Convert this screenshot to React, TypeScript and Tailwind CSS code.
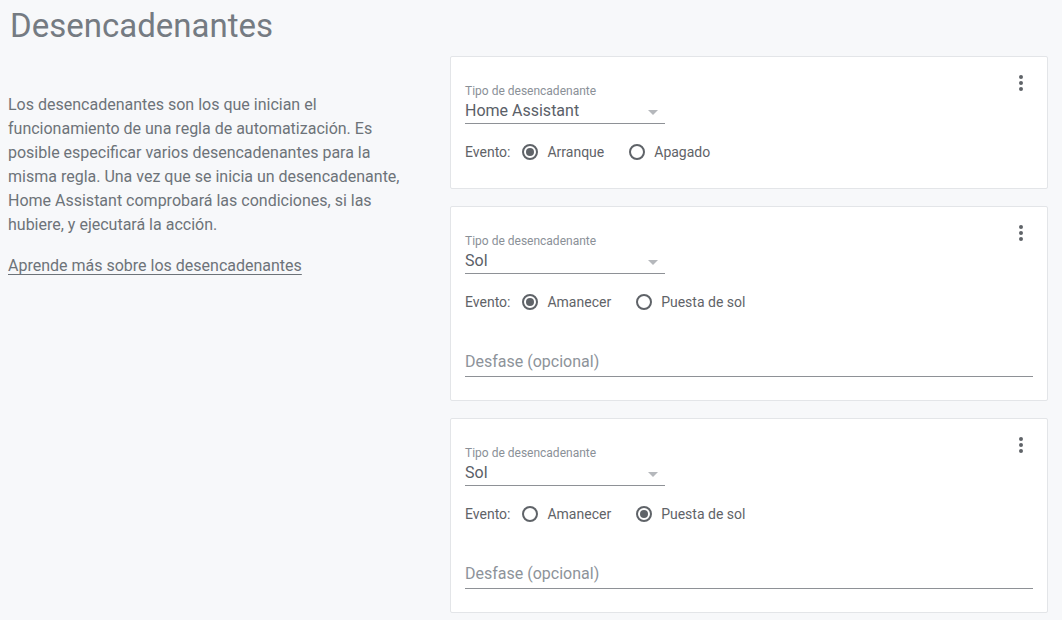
import React from "react";

const font = { fontFamily: "Roboto, 'Noto Sans', sans-serif" };

function Dots() {
  return (
    <svg width="24" height="24" viewBox="0 0 24 24" className="absolute top-[14px] right-[14px]">
      <path
        fill="#5f6368"
        d="M12,16A2,2 0 0,1 14,18A2,2 0 0,1 12,20A2,2 0 0,1 10,18A2,2 0 0,1 12,16M12,10A2,2 0 0,1 14,12A2,2 0 0,1 12,14A2,2 0 0,1 10,12A2,2 0 0,1 12,10M12,4A2,2 0 0,1 14,6A2,2 0 0,1 12,8A2,2 0 0,1 10,6A2,2 0 0,1 12,4Z"
      />
    </svg>
  );
}

function Radio({ checked, label }: { checked: boolean; label: string }) {
  return (
    <div className="flex items-center">
      <span className="w-4 h-4 rounded-full border-2 border-[#5f6368] flex items-center justify-center">
        {checked && <span className="w-2 h-2 rounded-full bg-[#5f6368]" />}
      </span>
      <span className="ml-[9px] text-[14px] text-[#5f6368]">{label}</span>
    </div>
  );
}

function Card({
  value,
  options,
  checked,
  offset,
}: {
  value: string;
  options: [string, string];
  checked: number;
  offset: boolean;
}) {
  return (
    <div
      className={
        offset
          ? "relative bg-white border border-[#e3e5e8] rounded-[2px] px-[14px] pt-[26px] pb-[23px]"
          : "relative bg-white border border-[#e3e5e8] rounded-[2px] px-[14px] pt-[26px] pb-[24px]"
      }
    >
      <Dots />
      <div className="w-[200px]">
        <div className="text-[12px] leading-[16px] text-[#8a9097]">Tipo de desencadenante</div>
        <div className="relative h-[25px] border-b border-[#8e9196] text-[16px] leading-[24px] text-[#5a6068]">
          {value}
          <span className="absolute right-[7px] top-[11px] w-0 h-0 border-l-[5px] border-r-[5px] border-t-[5px] border-l-transparent border-r-transparent border-t-[#b5b8bc]" />
        </div>
      </div>
      <div className="flex items-center h-6 mt-[16px] text-[14px] text-[#5f6368]">
        <span>Evento:</span>
        <div className="ml-3 flex items-center gap-[25px]">
          <Radio checked={checked === 0} label={options[0]} />
          <Radio checked={checked === 1} label={options[1]} />
        </div>
      </div>
      {offset && (
        <div className="mt-[38px] h-[25px] border-b border-[#8e9196] text-[16px] leading-[20px] text-[#8d939a]">
          Desfase (opcional)
        </div>
      )}
    </div>
  );
}

export default function App() {
  return (
    <div className="min-h-[620px] w-[1062px] bg-[#f7f8fa] overflow-hidden" style={font}>
      <div className="h-[56px] pl-[10px] pt-[6px] text-[33px] leading-[40px] text-[#757b82]">
        Desencadenantes
      </div>
      <div className="flex">
        <div className="w-[450px] pl-[8px] pr-[40px] pt-[37px]">
          <p className="text-[16px] leading-[24px] text-[#6d7379]">
            Los desencadenantes son los que inician el funcionamiento de una regla de automatización. Es
            posible especificar varios desencadenantes para la misma regla. Una vez que se inicia un
            desencadenante, Home Assistant comprobará las condiciones, si las hubiere, y ejecutará la
            acción.
          </p>
          <a className="block mt-[17px] text-[16px] leading-[24px] text-[#6d7379] underline underline-offset-[3px]">
            Aprende más sobre los desencadenantes
          </a>
        </div>
        <div className="w-[598px] flex flex-col gap-[17px]">
          <Card value="Home Assistant" options={["Arranque", "Apagado"]} checked={0} offset={false} />
          <Card value="Sol" options={["Amanecer", "Puesta de sol"]} checked={0} offset={true} />
          <Card value="Sol" options={["Amanecer", "Puesta de sol"]} checked={1} offset={true} />
        </div>
      </div>
    </div>
  );
}
